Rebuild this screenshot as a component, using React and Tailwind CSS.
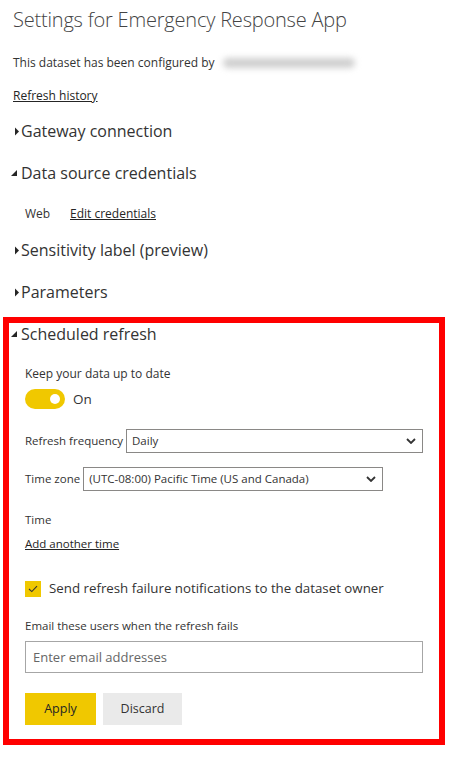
import { useState } from 'react'

function Caret({ open }) {
  if (open) {
    return (
      <svg width="8" height="8" viewBox="0 0 8 8" className="mr-[3px] shrink-0">
        <path d="M7 1 L7 7 L1 7 Z" fill="#252525" />
      </svg>
    )
  }
  return (
    <svg width="6" height="9" viewBox="0 0 6 9" className="ml-[1px] mr-[1px] shrink-0">
      <path d="M1 0.5 L5 4.5 L1 8.5 Z" fill="#252525" />
    </svg>
  )
}

function SectionHeader({ title, open }) {
  return (
    <div className="flex items-center h-[24px]">
      <Caret open={open} />
      <span className="text-[16px] text-[#333]">{title}</span>
    </div>
  )
}

function Chevron() {
  return (
    <svg width="10" height="6" viewBox="0 0 10 6">
      <path d="M1 1 L5 5 L9 1" stroke="#333" strokeWidth="1.8" fill="none" />
    </svg>
  )
}

function SelectBox({ value }) {
  return (
    <div className="flex-1 flex items-center justify-between h-[24px] border border-[#8a8886] pl-[5px] pr-[6px]">
      <span className="text-[11.5px] text-[#333] whitespace-nowrap">{value}</span>
      <Chevron />
    </div>
  )
}

export default function App() {
  const [on, setOn] = useState(true)
  const [notify, setNotify] = useState(true)

  return (
    <div
      className="w-[463px] h-[760px] bg-white px-[13px] text-[#333]"
      style={{ fontFamily: '"Open Sans", "Noto Sans", sans-serif' }}
    >
      <h1 className="pt-[6px] h-[36px] text-[20px] leading-[28px] font-light text-[#444] tracking-[-0.2px]">
        Settings for Emergency Response App
      </h1>

      <div className="mt-[19px] flex items-center h-[16px] text-[12px]">
        <span>This dataset has been configured by</span>
        <span className="ml-[8px] w-[132px] h-[10px] rounded-full bg-[#cfcfcf] blur-[3px]" />
      </div>

      <div className="mt-[17px] h-[16px] text-[12px] leading-[16px]">
        <a href="#" className="underline text-[#252525]">Refresh history</a>
      </div>

      <div className="mt-[15px]">
        <SectionHeader title="Gateway connection" />
      </div>

      <div className="mt-[18px] -ml-[3px]">
        <SectionHeader title="Data source credentials" open />
      </div>

      <div className="mt-[19px] h-[20px] flex items-center pl-[12px] text-[12px]">
        <span className="w-[45px]">Web</span>
        <a href="#" className="underline text-[#252525]">Edit credentials</a>
      </div>

      <div className="mt-[14px]">
        <SectionHeader title="Sensitivity label (preview)" />
      </div>

      <div className="mt-[18px]">
        <SectionHeader title="Parameters" />
      </div>

      <div className="mt-[13px] -ml-[10px] w-[442px] border-[6px] border-[#ff0000] pl-[1px] pr-[16px]">
        <div className="-mt-[1px]">
          <SectionHeader title="Scheduled refresh" open />
        </div>

        <div className="pl-[15px]">
          <div className="mt-[20px] h-[16px] text-[12px] leading-[16px]">Keep your data up to date</div>

          <div className="mt-[7px] flex items-center h-[20px]">
            <button
              onClick={() => setOn(!on)}
              className="relative w-[40px] h-[20px] rounded-full bg-[#f0c800]"
            >
              <span className="absolute right-[5px] top-[5px] w-[10px] h-[10px] rounded-full bg-white" />
            </button>
            <span className="ml-[8px] text-[13.5px]">{on ? 'On' : 'Off'}</span>
          </div>

          <div className="mt-[20px] flex items-center h-[24px] w-[398px] text-[12px]">
            <span className="mr-[3px] whitespace-nowrap text-[11.5px]">Refresh frequency</span>
            <SelectBox value="Daily" />
          </div>

          <div className="mt-[14px] flex items-center h-[24px] w-[358px] text-[12px]">
            <span className="mr-[3px] whitespace-nowrap text-[11.5px]">Time zone</span>
            <SelectBox value="(UTC-08:00) Pacific Time (US and Canada)" />
          </div>

          <div className="mt-[21px] h-[16px] text-[11.5px] leading-[16px]">Time</div>

          <div className="mt-[8px] h-[16px] text-[11.5px] leading-[16px]">
            <a href="#" className="underline text-[#252525]">Add another time</a>
          </div>

          <div className="mt-[29px] flex items-center h-[16px]">
            <button
              onClick={() => setNotify(!notify)}
              className="w-[16px] h-[16px] bg-[#f0c800] flex items-center justify-center"
            >
              {notify && (
                <svg width="10" height="8" viewBox="0 0 10 8">
                  <path d="M1 4 L3.8 6.6 L9 1.2" stroke="#333" strokeWidth="1.1" fill="none" />
                </svg>
              )}
            </button>
            <span className="ml-[8px] text-[13.3px]">Send refresh failure notifications to the dataset owner</span>
          </div>

          <div className="mt-[21px] h-[16px] text-[11.5px] leading-[16px]">Email these users when the refresh fails</div>

          <input
            placeholder="Enter email addresses"
            className="mt-[7px] block w-[398px] h-[32px] border border-[#a6a6a6] px-[7px] text-[13px] placeholder:text-[#666] outline-none"
          />

          <div className="mt-[20px] flex gap-[7px] pb-[14px]">
            <button className="w-[71px] h-[32px] bg-[#f0c800] text-[12.5px] text-[#252525]">Apply</button>
            <button className="w-[79px] h-[32px] bg-[#eaeaea] text-[12.5px] text-[#333]">Discard</button>
          </div>
        </div>
      </div>
    </div>
  )
}
